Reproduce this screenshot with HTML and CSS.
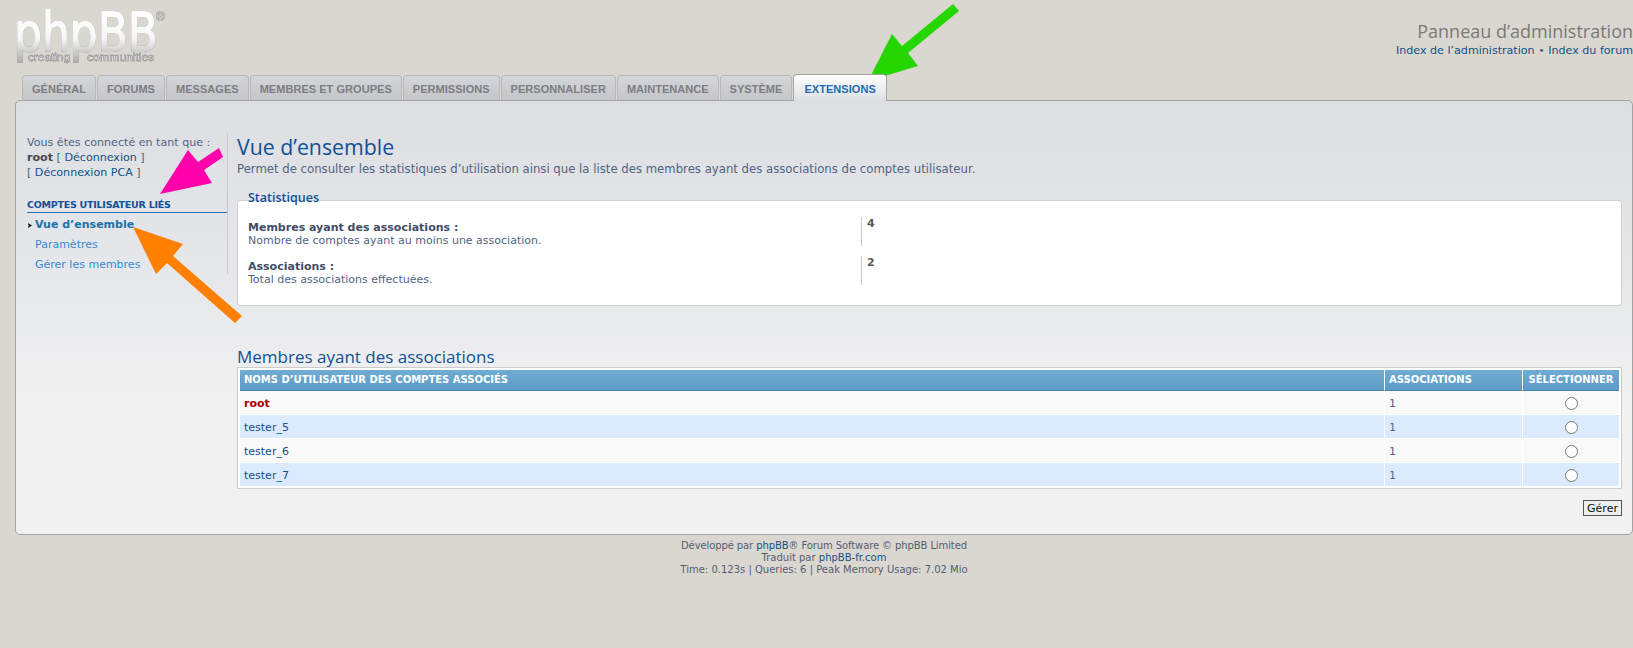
FILE: index.html
```html
<!DOCTYPE html>
<html lang="fr">
<head>
<meta charset="utf-8">
<title>Vue d’ensemble</title>
<link rel="stylesheet" href="styles.css">
</head>
<body>
<div class="page">
  <header class="head">
    <svg class="logo" width="170" height="66" viewBox="0 0 170 66">
      <defs>
        <linearGradient id="lg" gradientUnits="userSpaceOnUse" x1="0" y1="10" x2="0" y2="62">
          <stop offset="0" stop-color="#ffffff"/>
          <stop offset="0.55" stop-color="#f6f6f6"/>
          <stop offset="1" stop-color="#adadad"/>
        </linearGradient>
      </defs>
      <text class="logo-main" x="14" y="51" textLength="144" lengthAdjust="spacingAndGlyphs" fill="url(#lg)" stroke="url(#lg)">phpBB</text>
      <text class="logo-r" x="156" y="21">®</text>
      <text class="logo-sub" x="28" y="61" textLength="42" lengthAdjust="spacingAndGlyphs">creating</text>
      <text class="logo-sub" x="87" y="61" textLength="67" lengthAdjust="spacingAndGlyphs">communities</text>
    </svg>
    <div class="head-right">
      <h1 class="acp-title">Panneau d’administration</h1>
      <p class="acp-links"><a>Index de l’administration</a> • <a>Index du forum</a></p>
    </div>
  </header>
  <nav class="tabs">
    <a class="tab">GÉNÉRAL</a>
    <a class="tab">FORUMS</a>
    <a class="tab">MESSAGES</a>
    <a class="tab">MEMBRES ET GROUPES</a>
    <a class="tab">PERMISSIONS</a>
    <a class="tab">PERSONNALISER</a>
    <a class="tab">MAINTENANCE</a>
    <a class="tab">SYSTÈME</a>
    <a class="tab tab-active">EXTENSIONS</a>
  </nav>
  <div class="wrap">
    <aside class="side">
      <p class="who">Vous êtes connecté en tant que :<br><b>root</b> [ <a>Déconnexion</a> ]<br>[ <a>Déconnexion PCA</a> ]</p>
      <h3 class="side-title">COMPTES UTILISATEUR LIÉS</h3>
      <ul class="side-menu">
        <li class="side-current"><a>Vue d’ensemble</a></li>
        <li><a>Paramètres</a></li>
        <li><a>Gérer les membres</a></li>
      </ul>
    </aside>
    <main class="main">
      <h1 class="title">Vue d’ensemble</h1>
      <p class="lead">Permet de consulter les statistiques d’utilisation ainsi que la liste des membres ayant des associations de comptes utilisateur.</p>
      <fieldset class="stats">
        <legend>Statistiques</legend>
        <dl class="stat">
          <dt><b>Membres ayant des associations :</b><br>Nombre de comptes ayant au moins une association.</dt>
          <dd>4</dd>
        </dl>
        <dl class="stat">
          <dt><b>Associations :</b><br>Total des associations effectuées.</dt>
          <dd>2</dd>
        </dl>
      </fieldset>
      <h2 class="subtitle">Membres ayant des associations</h2>
      <table class="grid">
        <thead>
          <tr><th>NOMS D’UTILISATEUR DES COMPTES ASSOCIÉS</th><th class="col-n">ASSOCIATIONS</th><th class="col-s">SÉLECTIONNER</th></tr>
        </thead>
        <tbody>
          <tr class="row1"><td><a class="admin">root</a></td><td>1</td><td class="c"><span class="radio"></span></td></tr>
          <tr class="row2"><td><a>tester_5</a></td><td>1</td><td class="c"><span class="radio"></span></td></tr>
          <tr class="row1"><td><a>tester_6</a></td><td>1</td><td class="c"><span class="radio"></span></td></tr>
          <tr class="row2"><td><a>tester_7</a></td><td>1</td><td class="c"><span class="radio"></span></td></tr>
        </tbody>
      </table>
      <div class="actions"><button class="btn" type="button">Gérer</button></div>
    </main>
  </div>
  <footer class="foot">
    <span class="foot-first">Développé par <a>phpBB</a>® Forum Software © phpBB Limited</span><br>
    Traduit par <a>phpBB-fr.com</a><br>
    Time: 0.123s | Queries: 6 | Peak Memory Usage: 7.02 Mio
  </footer>
</div>
<svg class="arrows" width="1633" height="648" viewBox="0 0 1633 648">
  <polygon fill="#26d600" points="868,81 892,34 902,46 953,4 959,11 908,53 918,66"/>
  <polygon fill="#ff00aa" points="160,194 188,150 198,162 219,148 223,157 204,170 212,183"/>
  <polygon fill="#ff8000" points="133,227 183,244 173,256 242,316 235,323 167,263 156,274"/>
</svg>
</body>
</html>
```
FILE: styles.css
```css
html, body { margin: 0; padding: 0; }
body {
  background: #dad7d0;
  font-family: "DejaVu Sans", Verdana, sans-serif;
  font-size: 11px;
  color: #536482;
  overflow: hidden;
  height: 648px;
}
a { color: #105289; }
p, h1, h2, h3, ul, dl, dt, dd { margin: 0; padding: 0; }

.page { padding-left: 15px; }

.head { display: flex; justify-content: space-between; height: 75px; margin-left: -15px; }
.logo { display: block; overflow: visible; filter: drop-shadow(0 0 .7px #858585); }
.logo-main { font-family: "DejaVu Sans", sans-serif; font-size: 53px; stroke-width: 1.8px; stroke-linejoin: round; }
.logo-r { font-family: "Liberation Sans", sans-serif; font-size: 12px; fill: #f4f4f4; stroke: #999; stroke-width: .3px; }
.logo-sub { font-family: "Liberation Sans", sans-serif; font-size: 11px; fill: #f4f4f4; stroke: #8c8c8c; stroke-width: .4px; }
.head-right { text-align: right; padding-top: 20px; white-space: nowrap; }
.acp-title { font-family: "Open Sans", sans-serif; font-weight: 400; font-size: 18px; line-height: 22px; color: #7a7a78; }
.acp-links { font-size: 11.1px; line-height: 15px; margin-top: 1px; color: #536482; }

.tabs { display: flex; height: 25px; padding-left: 7px; position: relative; z-index: 1; gap: 1px; }
.tab {
  box-sizing: border-box;
  height: 25px;
  padding: 0 9px;
  border: 1px solid #b9b9b9;
  border-bottom: 0;
  border-radius: 4px 4px 0 0;
  background: linear-gradient(#d5d6d9, #c4c5c9);
  font: bold 11px/26px "Liberation Sans", Arial, sans-serif;
  color: #7c7d81;
  letter-spacing: .04px;
  white-space: nowrap;
}
.tab-active {
  height: 27px;
  margin-top: -1px;
  padding: 0 10px;
  border-color: #a3a3a3;
  background: linear-gradient(#ffffff, #dcdee2);
  color: #1e6db0;
  line-height: 28px;
  position: relative;
}

.wrap {
  box-sizing: border-box;
  width: 1618px;
  height: 435px;
  display: flex;
  border: 1px solid #a3a3a3;
  border-radius: 5px;
  background: linear-gradient(#dcdee2 0, #e8e9ec 200px, #f1f1f1 300px, #f1f1f1 100%);
  padding: 32px 10px 0 11px;
}
.side { width: 200px; flex: none; height: 141px; border-right: 1px solid #c8ccd1; box-sizing: content-box; }
.who { line-height: 15px; padding-top: 2px; font-size: 11.1px; color: #536482; }
.who b { color: #44484f; }
.side-title {
  margin-top: 18px;
  font: bold 9.5px/14px "DejaVu Sans", sans-serif;
  color: #115098;
  border-bottom: 1px solid #2a77ad;
  letter-spacing: -.25px;
}
.side-menu { list-style: none; padding: 2px 0 0 8px; }
.side-menu li { line-height: 20px; }
.side-menu a { color: #368ad2; }
.side-current { position: relative; font-weight: bold; }
.side-current a { color: #1a72a8; }
.side-current::before {
  content: "";
  position: absolute;
  left: -7px;
  top: 8px;
  width: 4px;
  height: 5px;
  background: #111;
  clip-path: polygon(0 0, 100% 50%, 0 100%, 15% 50%);
}

.main { flex: 1; padding-left: 9px; min-width: 0; }
.title { font-family: "Open Sans", sans-serif; font-weight: 400; font-size: 21.3px; line-height: 28px; color: #115098; }
.lead { line-height: 16px; font-size: 11.7px; color: #536482; white-space: nowrap; }

.stats {
  position: relative;
  margin: 23px 0 0;
  padding: 15px 11px 10px;
  height: 106px;
  box-sizing: border-box;
  border: 0;
  background: #fff;
  border-radius: 4px;
  box-shadow: inset 0 0 0 1px #d1d1d1;
  min-width: 0;
}
.stats legend {
  position: absolute;
  left: 11px;
  top: -10px;
  padding: 0;
  font-family: "Open Sans", sans-serif;
  font-weight: 600;
  font-size: 12.5px;
  line-height: 16px;
  color: #115098;
}
.stat { display: flex; height: 29px; margin-top: 4px; margin-bottom: 10px; line-height: 13px; }
.stat dt { width: 613px; padding-top: 2px; flex: none; }
.stat dt b { color: #3f4d68; }
.stat dd { border-left: 1px solid #c9c9c9; padding-left: 5px; margin-top: -2px; font-weight: bold; color: #5b5a4f; height: 29px; }

.subtitle { font-family: "Open Sans", sans-serif; font-weight: 400; font-size: 17px; line-height: 20px; color: #115098; margin-top: 41px; }
.grid {
  width: 100%;
  table-layout: fixed;
  border-collapse: separate;
  border-spacing: 0;
  border: 1px solid #ccc;
  background: #fff;
  padding: 2px;
  font-size: 11px;
}
.grid th {
  height: 20px;
  padding: 0 4px;
  text-align: left;
  font: bold 10px/20px "DejaVu Sans", sans-serif;
  color: #fff;
  background: linear-gradient(#70acd3, #5b9bc5);
  border-bottom: 1px solid #4a87ad;
  border-left: 1px solid #fff;
  white-space: nowrap;
}
.grid th:first-child { border-left: 0; }
.grid .col-n { width: 129px; }
.grid .col-s { width: 92px; text-align: center; padding: 0 2px; }
.grid td { height: 24px; padding: 1px 4px 0; box-sizing: border-box; border-left: 1px solid #fff; border-bottom: 1px solid #fff; }
.grid td:first-child { border-left: 0; }
.grid tr:last-child td { border-bottom: 0; height: 23px; }
.grid .c { text-align: center; padding: 1px 0 0; }
.row1 td { background: #f9f9f9; }
.row2 td { background: #dceaff; }
.grid td a { color: #105289; font-size: 11px; }
.grid td a.admin { color: #aa0000; font-weight: bold; }
.radio {
  display: block;
  box-sizing: border-box;
  width: 13px;
  height: 13px;
  margin: 0 auto;
  border: 1.5px solid #777;
  border-radius: 50%;
  background: #fff;
}
.actions { text-align: right; margin-top: 11px; }
.btn {
  box-sizing: border-box;
  width: 39px;
  height: 16px;
  padding: 0;
  font: 11px/13px "DejaVu Sans", sans-serif;
  color: #111;
  background: #efefef;
  border: 1px solid #555;
  border-radius: 0;
}

.foot { width: 1618px; text-align: center; font-size: 10px; line-height: 12px; margin-top: 5px; color: #555e70; }
.foot-first { letter-spacing: -.1px; }

.arrows { position: absolute; left: 0; top: 0; pointer-events: none; }
```
